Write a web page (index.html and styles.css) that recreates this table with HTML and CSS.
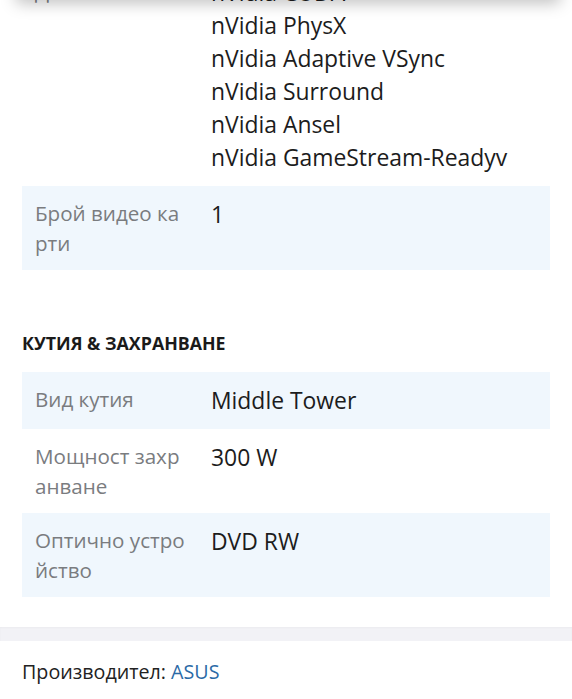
FILE: index.html
```html
<!DOCTYPE html>
<html lang="bg">
<head>
<meta charset="utf-8">
<title>Характеристики</title>
<link rel="stylesheet" href="styles.css">
</head>
<body>
<div class="header-shadow"></div>
<main class="page">
  <section class="specs specs-first">
    <div class="row">
      <div class="label">Допълнително</div>
      <div class="value">
        <div>nVidia CUDA</div>
        <div>nVidia PhysX</div>
        <div>nVidia Adaptive VSync</div>
        <div>nVidia Surround</div>
        <div>nVidia Ansel</div>
        <div>nVidia GameStream-Readyv</div>
      </div>
    </div>
    <div class="row alt">
      <div class="label">Брой видео карти</div>
      <div class="value">1</div>
    </div>
  </section>

  <section class="specs">
    <h2 class="heading">КУТИЯ &amp; ЗАХРАНВАНЕ</h2>
    <div class="row alt">
      <div class="label">Вид кутия</div>
      <div class="value">Middle Tower</div>
    </div>
    <div class="row">
      <div class="label">Мощност захранване</div>
      <div class="value">300 W</div>
    </div>
    <div class="row alt">
      <div class="label">Оптично устройство</div>
      <div class="value">DVD RW</div>
    </div>
  </section>
</main>
<div class="band"></div>
<footer class="maker">Производител: <a class="maker-link" href="#">ASUS</a></footer>
</body>
</html>
```
FILE: styles.css
```css
html, body {
  margin: 0;
  padding: 0;
  background: #ffffff;
  font-family: "Open Sans", "Noto Sans", sans-serif;
  color: #1c1c1c;
  overflow: hidden;
}

.header-shadow {
  position: fixed;
  top: -20px;
  left: 16px;
  right: 12px;
  height: 20px;
  background: #fff;
  box-shadow: 0 3px 16px rgba(0, 0, 0, 0.26);
  z-index: 5;
}

.page {
  padding: 0 22px;
}

.specs-first {
  margin-top: -36px;
}

.row {
  display: grid;
  grid-template-columns: 153px 1fr;
  column-gap: 23px;
  padding: 12px 13px;
}

.row.alt {
  background: #f0f7fd;
}

.label {
  font-size: 20.6px;
  line-height: 30px;
  color: #7a7c7f;
  word-break: break-all;
}

.value {
  font-size: 22.9px;
  line-height: 33px;
  color: #1c1c1c;
}

.heading {
  margin: 62px 0 18px;
  font-size: 17.8px;
  line-height: 22px;
  font-weight: 700;
  color: #1a1a1a;
}

.band {
  margin-top: 30px;
  height: 14px;
  background: #f2f2f6;
  box-shadow: inset 0 1px 2px rgba(0, 0, 0, 0.03);
}

.maker {
  padding: 18px 22px;
  font-size: 19.7px;
  line-height: 26px;
  color: #222;
}

.maker-link {
  color: #2b6aa6;
  text-decoration: none;
}
```
